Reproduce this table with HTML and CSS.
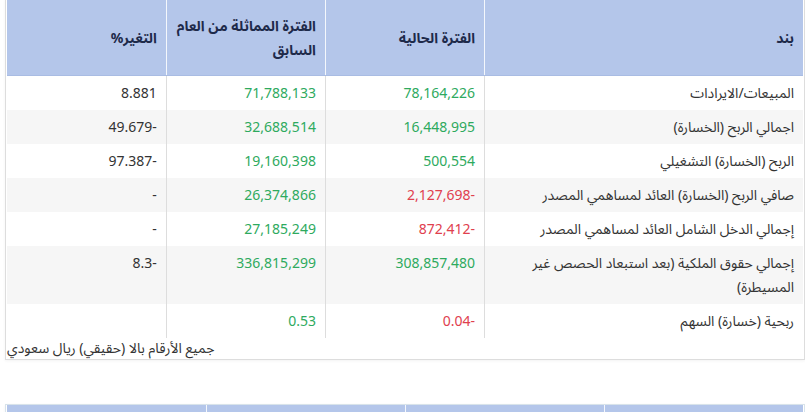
FILE: index.html
```html
<!DOCTYPE html>
<html lang="ar" dir="rtl">
<head>
<meta charset="utf-8">
<title>القوائم المالية</title>
<link rel="stylesheet" href="styles.css">
</head>
<body>
<div class="panel">
  <table class="fin">
    <colgroup>
      <col class="c-item"><col class="c-num"><col class="c-num"><col class="c-num">
    </colgroup>
    <thead>
      <tr>
        <th>بند</th>
        <th>الفترة الحالية</th>
        <th>الفترة المماثلة من العام<br>السابق</th>
        <th>التغير%</th>
      </tr>
    </thead>
    <tbody>
      <tr><td>المبيعات/الايرادات</td><td class="pos">78,164,226</td><td class="pos">71,788,133</td><td>8.881</td></tr>
      <tr><td>اجمالي الربح (الخسارة)</td><td class="pos">16,448,995</td><td class="pos">32,688,514</td><td>-49.679</td></tr>
      <tr><td>الربح (الخسارة) التشغيلي</td><td class="pos">500,554</td><td class="pos">19,160,398</td><td>-97.387</td></tr>
      <tr><td>صافي الربح (الخسارة) العائد لمساهمي المصدر</td><td class="neg">-2,127,698</td><td class="pos">26,374,866</td><td>-</td></tr>
      <tr><td>إجمالي الدخل الشامل العائد لمساهمي المصدر</td><td class="neg">-872,412</td><td class="pos">27,185,249</td><td>-</td></tr>
      <tr><td>إجمالي حقوق الملكية (بعد استبعاد الحصص غير المسيطرة)</td><td class="pos">308,857,480</td><td class="pos">336,815,299</td><td>-8.3</td></tr>
      <tr><td>ربحية (خسارة) السهم</td><td class="neg">-0.04</td><td class="pos">0.53</td><td></td></tr>
    </tbody>
  </table>
  <div class="note">جميع الأرقام بالا (حقيقي) ريال سعودي</div>
</div>

<div class="panel panel-next">
  <table class="fin">
    <thead>
      <tr><th></th><th></th><th></th><th></th></tr>
    </thead>
  </table>
</div>
</body>
</html>
```

FILE: styles.css
```css
html, body {
  margin: 0;
  padding: 0;
  background: #ffffff;
}

body {
  font-family: "Noto Sans", "Noto Sans Arabic", "Noto Naskh Arabic", "DejaVu Sans", sans-serif;
  font-size: 14px;
  color: #333333;
}

.panel {
  width: 800px;
  box-sizing: border-box;
  margin: -1px 0 0 5px;
  border: 1px solid #dddddd;
  padding: 0 1px;
  box-shadow: 0 1px 3px rgba(0, 0, 0, 0.05);
}

.panel-next {
  margin-top: 44px;
  border-color: #d8e3ea;
}

.fin {
  width: 100%;
  border-collapse: collapse;
  table-layout: fixed;
}

.c-item { width: 40%; }
.c-num { width: 20%; }

.fin th {
  background: #b4c6ea;
  color: #1e2a4a;
  font-weight: bold;
  text-align: right;
  vertical-align: middle;
  line-height: 24px;
  padding: 14px 9px 13px;
  border-left: 1px solid #f4f7fc;
  border-bottom: 1px solid #a9bce3;
}

.fin th:last-child { border-left: none; }

.fin td {
  text-align: right;
  vertical-align: top;
  line-height: 24px;
  padding: 5px 9px;
  border-left: 1px solid #dddddd;
}

.fin td:last-child { border-left: none; }

.fin tbody tr:nth-child(even) td {
  background: #f6f6f6;
}

.pos { color: #2eaa5e; }
.neg { color: #e0404e; }

.note {
  text-align: left;
  line-height: 20px;
  padding: 0 0 1px 0;
}

.panel-next th {
  padding: 0;
  height: 20px;
}
```
